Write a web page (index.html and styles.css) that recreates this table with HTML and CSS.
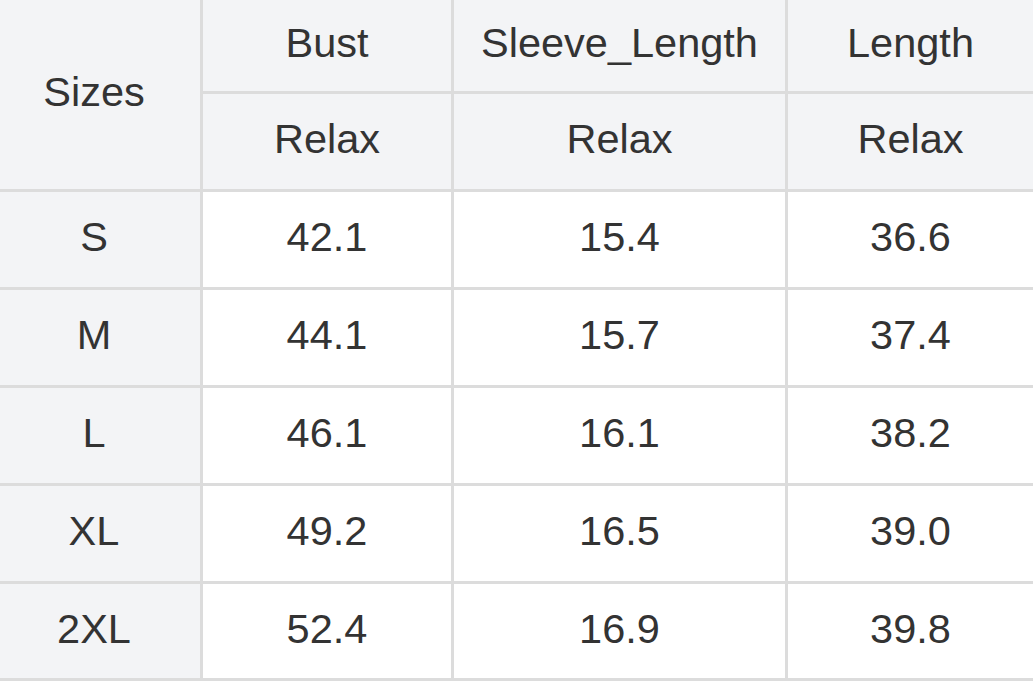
FILE: index.html
```html
<!DOCTYPE html>
<html lang="en">
<head>
<meta charset="utf-8">
<title>Size chart</title>
<link rel="stylesheet" href="styles.css">
</head>
<body>
<div class="chart">
  <div class="cell head first corner">Sizes</div>
  <div class="cell head">Bust</div>
  <div class="cell head">Sleeve_Length</div>
  <div class="cell head">Length</div>
  <div class="cell head">Relax</div>
  <div class="cell head">Relax</div>
  <div class="cell head">Relax</div>

  <div class="cell head first">S</div>
  <div class="cell">42.1</div>
  <div class="cell">15.4</div>
  <div class="cell">36.6</div>

  <div class="cell head first">M</div>
  <div class="cell">44.1</div>
  <div class="cell">15.7</div>
  <div class="cell">37.4</div>

  <div class="cell head first">L</div>
  <div class="cell">46.1</div>
  <div class="cell">16.1</div>
  <div class="cell">38.2</div>

  <div class="cell head first">XL</div>
  <div class="cell">49.2</div>
  <div class="cell">16.5</div>
  <div class="cell">39.0</div>

  <div class="cell head first">2XL</div>
  <div class="cell">52.4</div>
  <div class="cell">16.9</div>
  <div class="cell">39.8</div>
</div>
</body>
</html>
```
FILE: styles.css
```css
html, body {
  margin: 0;
  padding: 0;
  background: #ffffff;
}

.chart {
  display: grid;
  grid-template-columns: 200px 248px 331px 1fr;
  grid-template-rows: 91px 95px repeat(4, 95px) 94px;
  gap: 3px;
  padding-bottom: 3px;
  background: #dcdcdc;
  width: 1033px;
  font-family: "Liberation Sans", Arial, sans-serif;
  font-size: 41.5px;
  color: #333333;
}

.cell {
  background: #ffffff;
  display: flex;
  align-items: center;
  justify-content: center;
  padding-bottom: 5px;
  box-sizing: border-box;
}

.head {
  background: #f3f4f6;
}

.first {
  padding-right: 12px;
}

.corner {
  grid-row: span 2;
}
```
